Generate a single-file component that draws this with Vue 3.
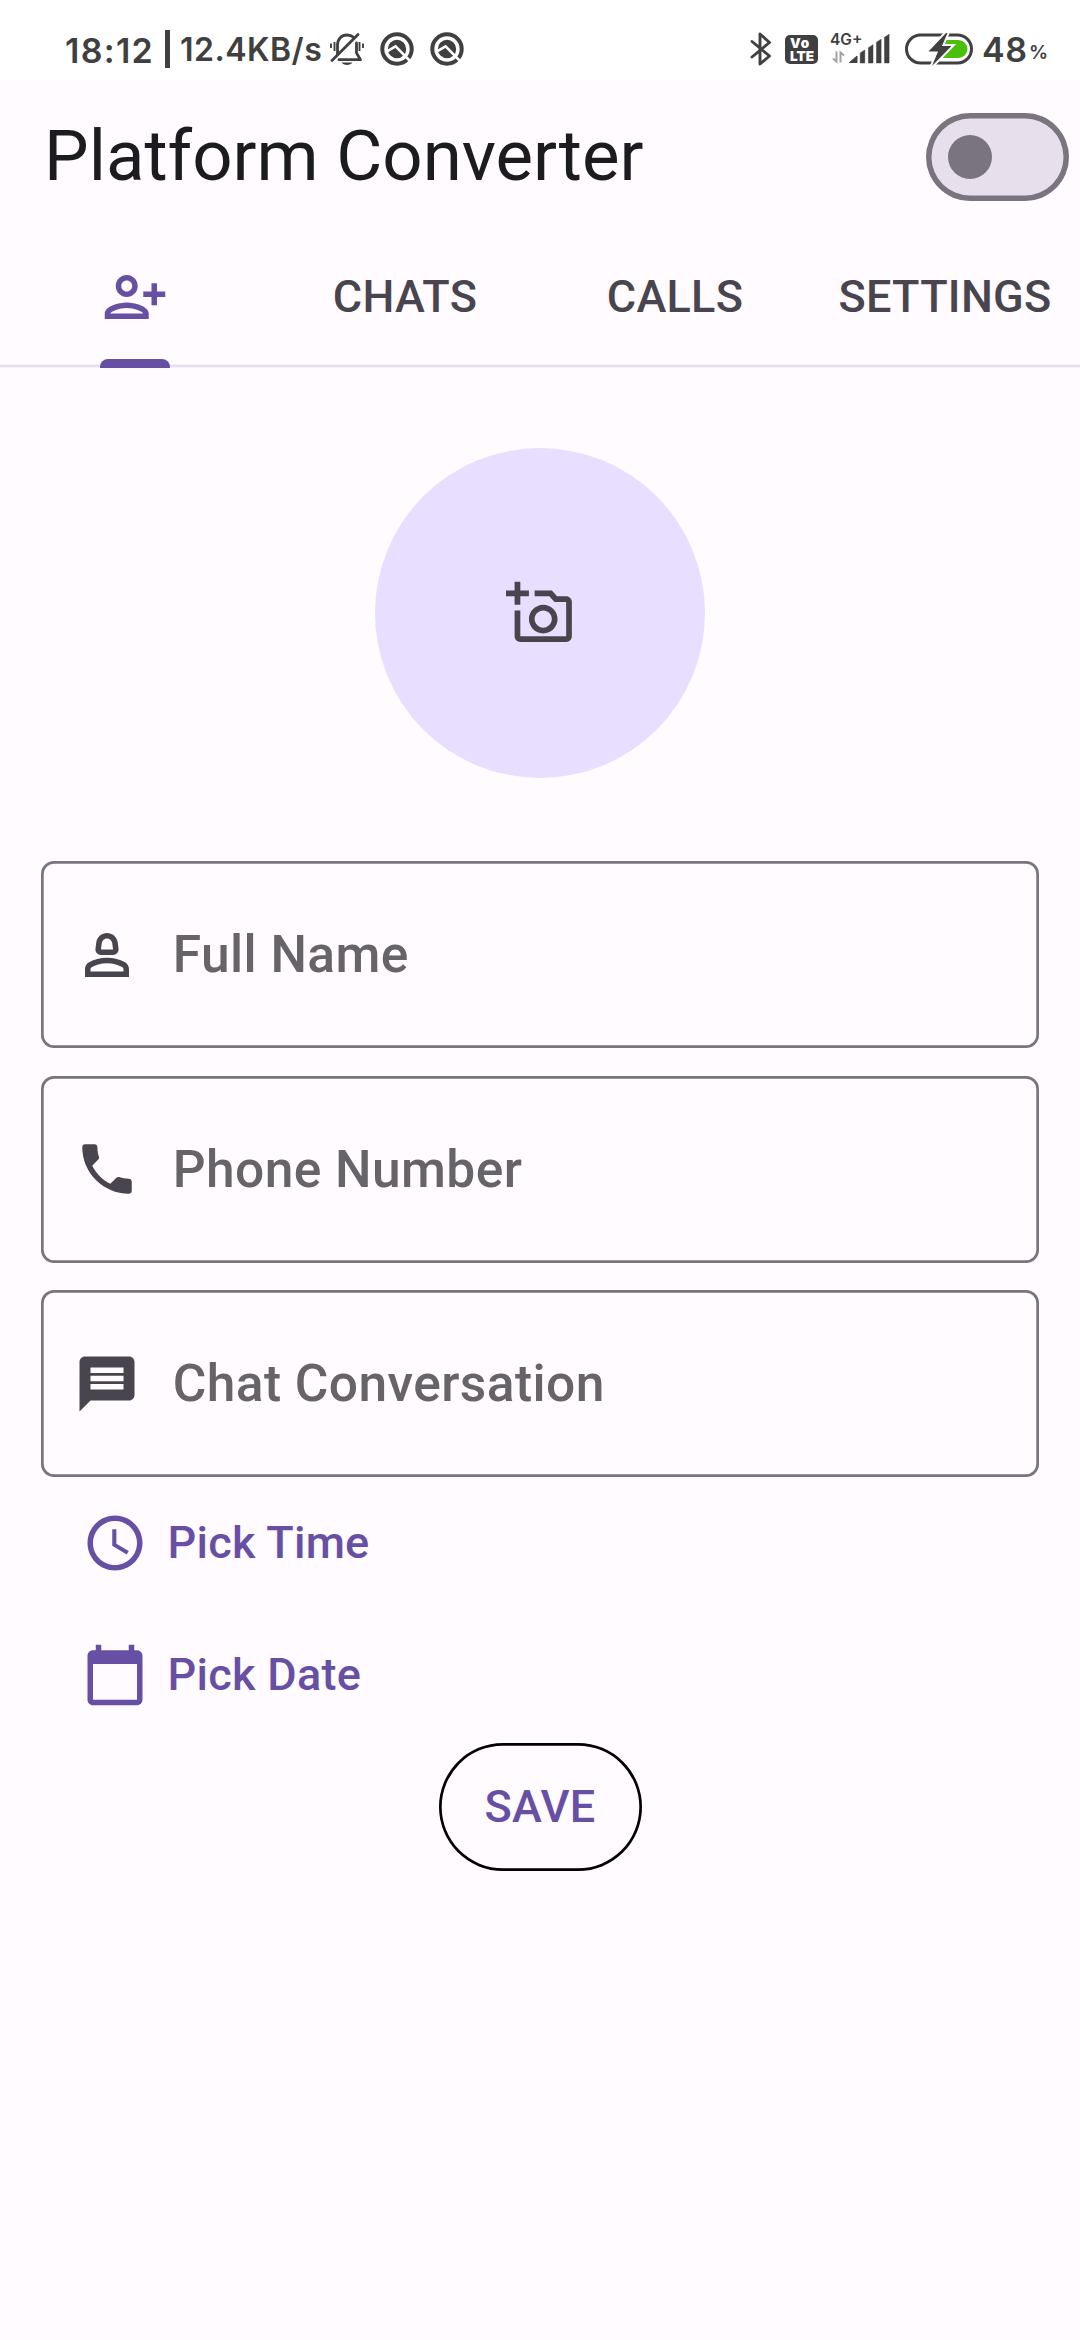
<script setup>
import { ref } from 'vue'

const tabs = ['CHATS', 'CALLS', 'SETTINGS']
const bars = [
  { x: 29.2, y: 16, h: 13 },
  { x: 37.4, y: 10.7, h: 18.3 },
  { x: 45.5, y: 5.2, h: 23.8 },
  { x: 53.5, y: 0.3, h: 28.7 }
]

const fields = [
  {
    label: 'Full Name',
    icon: 'M18.39 14.56C16.71 13.7 14.53 13 12 13s-4.71.7-6.39 1.56A2.97 2.97 0 0 0 4 17.22V20h16v-2.78c0-1.12-.61-2.15-1.61-2.66zM18 18H6v-.78c0-.38.2-.72.52-.88C7.71 15.73 9.63 15 12 15c2.36 0 4.28.73 5.48 1.34.32.16.52.5.52.88V18zM9.78 12h4.44c1.21 0 2.14-1.06 1.98-2.26l-.32-2.45C15.57 5.39 13.92 4 12 4S8.43 5.39 8.12 7.29L7.8 9.74c-.16 1.2.77 2.26 1.98 2.26zm.32-4.39C10.26 6.67 11.06 6 12 6s1.74.67 1.9 1.61l.29 2.39H9.81l.29-2.39z'
  },
  {
    label: 'Phone Number',
    icon: 'M6.62 10.79c1.44 2.83 3.76 5.14 6.59 6.59l2.2-2.2c.27-.27.67-.36 1.02-.24 1.12.37 2.33.57 3.57.57.55 0 1 .45 1 1V20c0 .55-.45 1-1 1-9.39 0-17-7.61-17-17 0-.55.45-1 1-1h3.5c.55 0 1 .45 1 1 0 1.25.2 2.45.57 3.57.11.35.03.74-.25 1.02l-2.2 2.2z'
  },
  {
    label: 'Chat Conversation',
    icon: 'M20 2H4c-1.1 0-1.99.9-1.99 2L2 22l4-4h14c1.1 0 2-.9 2-2V4c0-1.1-.9-2-2-2zM18 14H6v-2h12v2zM18 11H6V9h12v2zM18 8H6V6h12v2z'
  }
]

const pickers = [
  {
    label: 'Pick Time',
    icon: 'M11.99 2C6.47 2 2 6.48 2 12s4.47 10 9.99 10C17.52 22 22 17.52 22 12S17.52 2 11.99 2zM12 20c-4.42 0-8-3.58-8-8s3.58-8 8-8 8 3.58 8 8-3.58 8-8 8zM12.5 7H11v6l5.25 3.15.75-1.23-4.5-2.67z'
  },
  {
    label: 'Pick Date',
    icon: 'M20 3h-1V1h-2v2H7V1H5v2H4c-1.1 0-2 .9-2 2v16c0 1.1.9 2 2 2h16c1.1 0 2-.9 2-2V5c0-1.1-.9-2-2-2zm0 18H4V8h16v13z'
  }
]

const cupertino = ref(false)
</script>

<template>
  <div class="screen">
    <div class="status">
      <span class="clock">18:12</span>
      <i class="sep"></i>
      <span class="speed">12.4KB/s</span>
      <svg class="bell" width="34" height="34" viewBox="0 0 34 34" fill="none" stroke="#404040" stroke-linecap="round">
        <path d="M7.5 21V12.5C7.5 6 11.5 2 17 2C19.5 2 21.8 2.8 23.5 4.3M26.5 10V20L30.5 26.7H9" stroke-width="2.8" stroke-linejoin="round" />
        <path d="M2 27.5L28 1.5" stroke-width="2.8" />
        <path d="M1 10.5V15M4.5 9V18M33 10.5V15M29.5 9V18" stroke-width="1.9" stroke-linecap="butt" />
        <path d="M11.5 29.5H22.5C20.5 32.8 13.5 32.8 11.5 29.5Z" fill="#404040" stroke="none" />
      </svg>
      <svg v-for="n in 2" :key="n" class="round" width="34" height="34" viewBox="0 0 34 34">
        <circle cx="17" cy="17" r="14.7" fill="none" stroke="#404040" stroke-width="4" />
        <circle cx="17" cy="17" r="9.2" fill="#404040" />
        <path d="M6.5 19.7L15.6 14.4L31 30" fill="none" stroke="#fff" stroke-width="2.5" />
      </svg>
      <span class="grow"></span>
      <svg class="bt" width="22" height="34" viewBox="0 0 22 34" fill="none" stroke="#404040" stroke-width="2.9" stroke-linejoin="round" stroke-linecap="round">
        <path d="M2 9.5L19.5 24L10 32V2L19.5 10.5L2 25" />
      </svg>
      <div class="volte"><b class="vo">Vo</b><b>LTE</b></div>
      <div class="signal">
        <span class="net">4G+</span>
        <svg width="59" height="30" viewBox="0 0 59 30">
          <path d="M5.5 17.5V27.5L2 24.5M9.5 28.5V18.5L13 21.5" fill="none" stroke="#a3a3a3" stroke-width="2" />
          <path d="M18.5 28.5L26 22V28.5Z" fill="#404040" stroke="#404040" stroke-linejoin="round" />
          <path v-for="b in bars" :key="b.x" :d="`M${b.x} ${b.y + 3}L${b.x + 4.6} ${b.y}V${b.y + b.h}H${b.x}Z`" fill="#404040" stroke="#404040" stroke-width=".5" stroke-linejoin="round" />
        </svg>
      </div>
      <svg class="battery" width="68" height="32" viewBox="0 0 68 32">
        <rect x="1.5" y="2" width="65" height="28" rx="14" fill="none" stroke="#404040" stroke-width="3" />
        <path d="M38 7H53.5A9 9 0 0 1 53.5 25H38Z" fill="#4ac00b" />
        <path d="M41 0L23.5 18.5H33L27 33L46.5 13H37L42.5 0Z" fill="#404040" stroke="#fff" stroke-width="4" paint-order="stroke" />
      </svg>
      <span class="level">48</span>
      <span class="percent">%</span>
    </div>

    <header class="toolbar">
      <h1>Platform Converter</h1>
      <button class="switch" :class="{ on: cupertino }" aria-label="Toggle platform" @click="cupertino = !cupertino">
        <i></i>
      </button>
    </header>

    <nav class="tabs">
      <a class="tab active">
        <svg class="icon" viewBox="0 0 24 24">
          <path fill-rule="evenodd" d="M13 8c0-2.21-1.79-4-4-4S5 5.79 5 8s1.79 4 4 4 4-1.79 4-4zm-2 0c0 1.1-.9 2-2 2s-2-.9-2-2 .9-2 2-2 2 .9 2 2zM1 18v2h16v-2c0-2.66-5.33-4-8-4s-8 1.34-8 4zm2 0c.2-.71 3.3-2 6-2 2.69 0 5.78 1.28 6 2H3zM20 15v-3h3v-2h-3V7h-2v3h-3v2h3v3h2z" />
        </svg>
        <i class="indicator"></i>
      </a>
      <a v-for="tab in tabs" :key="tab" class="tab">{{ tab }}</a>
    </nav>

    <main>
      <div class="avatar">
        <svg width="68.75" height="68.75" viewBox="0 0 24 24">
          <path fill-rule="evenodd" d="M21 6h-3.17L16 4h-6v2h5.12l1.83 2H21v12H5v-9H3v9c0 1.1.9 2 2 2h16c1.1 0 2-.9 2-2V8c0-1.1-.9-2-2-2zM8 14c0 2.76 2.24 5 5 5s5-2.24 5-5-2.24-5-5-5-5 2.24-5 5zm5-3c1.65 0 3 1.35 3 3s-1.35 3-3 3-3-1.35-3-3 1.35-3 3-3zM5 6h3V4H5V1H3v3H0v2h3v3h2z" />
        </svg>
      </div>

      <div class="fields">
        <label v-for="f in fields" :key="f.label" class="field">
          <svg class="icon" viewBox="0 0 24 24"><path fill-rule="evenodd" :d="f.icon" /></svg>
          <span>{{ f.label }}</span>
        </label>
      </div>

      <div v-for="p in pickers" :key="p.label" class="picker">
        <svg class="icon" viewBox="0 0 24 24"><path fill-rule="evenodd" :d="p.icon" /></svg>
        <span>{{ p.label }}</span>
      </div>

      <button class="save">SAVE</button>
    </main>
  </div>
</template>

<style>
body {
  background: #fffbff;
}
</style>

<style scoped>
.screen {
  width: 1080px;
  height: 2340px;
  overflow: hidden;
  background: #fffbff;
  font-family: Roboto, sans-serif;
  color: #1c1b1f;
}
button {
  padding: 0;
  font: inherit;
}
svg {
  display: block;
  flex: none;
}
.icon {
  width: 66px;
  height: 66px;
  fill: currentColor;
}

/* status bar */
.status {
  display: flex;
  align-items: flex-start;
  box-sizing: border-box;
  height: 80px;
  padding-left: 65px;
  background: #fff;
  color: #404040;
  font-family: Inter, sans-serif;
  font-weight: 600;
  white-space: nowrap;
}
.clock {
  width: 100px;
  margin-top: 31px;
  font-size: 34px;
  letter-spacing: 1.3px;
  line-height: 40px;
}
.sep {
  width: 5px;
  height: 38px;
  margin-top: 30px;
  background: #404040;
}
.speed {
  width: 150px;
  margin: 30px 0 0 10px;
  font-size: 32px;
  letter-spacing: 0.5px;
  line-height: 40px;
}
.bell {
  margin-top: 33px;
}
.round {
  margin: 32px 0 0 16px;
}
.grow {
  flex: 1;
}
.bt {
  margin: 32px 13px 0 0;
}
.volte {
  display: flex;
  flex-direction: column;
  box-sizing: border-box;
  width: 33px;
  height: 29px;
  margin: 35px 13px 0 0;
  padding: 2px 0 0 5px;
  border-radius: 5px;
  background: #404040;
  color: #fff;
  font-size: 13.5px;
  font-weight: 700;
  line-height: 12.5px;
}
.vo {
  letter-spacing: 1px;
}
.signal {
  position: relative;
  width: 59px;
  height: 30px;
  margin: 34px 15px 0 0;
}
.net {
  position: absolute;
  left: -1px;
  top: -2px;
  font-size: 15.5px;
  line-height: 16px;
}
.battery {
  margin: 33px 9px 0 0;
  overflow: visible;
}
.level {
  width: 47px;
  margin-top: 30px;
  font-size: 34px;
  letter-spacing: 0.6px;
  line-height: 40px;
}
.percent {
  width: 51px;
  margin-top: 41px;
  font-size: 19px;
  line-height: 24px;
}

/* app bar */
.toolbar {
  display: flex;
  align-items: center;
  justify-content: space-between;
  height: 154px;
  padding: 0 11px 0 44px;
}
h1 {
  margin: 0 0 3px;
  font-size: 70.8px;
  font-weight: 400;
  line-height: 90px;
}
.switch {
  display: flex;
  align-items: center;
  box-sizing: border-box;
  width: 143px;
  height: 88px;
  padding-left: 22px;
  border: none;
  border-radius: 44px;
  background: #e7e0ec;
  box-shadow: inset 0 0 0 5.5px #79747e;
}
.switch i {
  width: 44px;
  height: 44px;
  border-radius: 50%;
  background: #79747e;
}
.switch.on {
  justify-content: flex-end;
  padding: 0 22px 0 0;
}

/* tabs */
.tabs {
  display: grid;
  grid-template-columns: repeat(4, 1fr);
  box-sizing: border-box;
  height: 134px;
  background: linear-gradient(#f4eff6, #f4eff6) 0 130px / 100% 1px no-repeat,
    linear-gradient(#e7e0ec, #e7e0ec) 0 131px / 100% 2px no-repeat,
    linear-gradient(#f6f1f8, #f6f1f8) 0 133px / 100% 1px no-repeat;
}
.tab {
  position: relative;
  color: #49454f;
  font-size: 45px;
  font-weight: 500;
  letter-spacing: 0.28px;
  line-height: 126px;
  text-align: center;
}
.tab .icon {
  margin: 30px auto 0;
}
.active {
  color: #6750a4;
}
.indicator {
  position: absolute;
  left: 100px;
  bottom: 0;
  width: 70px;
  height: 9px;
  border-radius: 8px 8px 0 0;
  background: #6750a4;
}

/* form */
.avatar {
  display: flex;
  align-items: center;
  justify-content: center;
  width: 330px;
  height: 330px;
  margin: 80px auto 0;
  border-radius: 50%;
  background: #e8deff;
  fill: #49454f;
}
.fields {
  display: flex;
  flex-direction: column;
  gap: 27.5px;
  margin: 83px 41px 0;
}
.field {
  display: flex;
  align-items: center;
  box-sizing: border-box;
  height: 187px;
  padding-left: 33.4px;
  border-radius: 13px;
  box-shadow: inset 0 0 0 2.7px #79747e;
  color: #49454f;
}
.field span {
  margin: 1px 0 0 32.4px;
  color: #666468;
  font-size: 51.5px;
  font-weight: 500;
  letter-spacing: 0.42px;
  line-height: 70px;
}
.picker {
  display: flex;
  align-items: center;
  height: 132px;
  padding-left: 81.5px;
  color: #6750a4;
  font-size: 45px;
  font-weight: 500;
  letter-spacing: 0.28px;
}
.picker span {
  margin: 0 0 2px 20px;
}
.save {
  display: block;
  width: 203px;
  height: 128px;
  margin: 2px auto 0;
  padding-bottom: 1px;
  border: none;
  border-radius: 64px;
  background: none;
  box-shadow: inset 0 0 0 2.7px #000;
  color: #6750a4;
  font-size: 45px;
  font-weight: 500;
  letter-spacing: 0.28px;
  line-height: 127px;
}
</style>
